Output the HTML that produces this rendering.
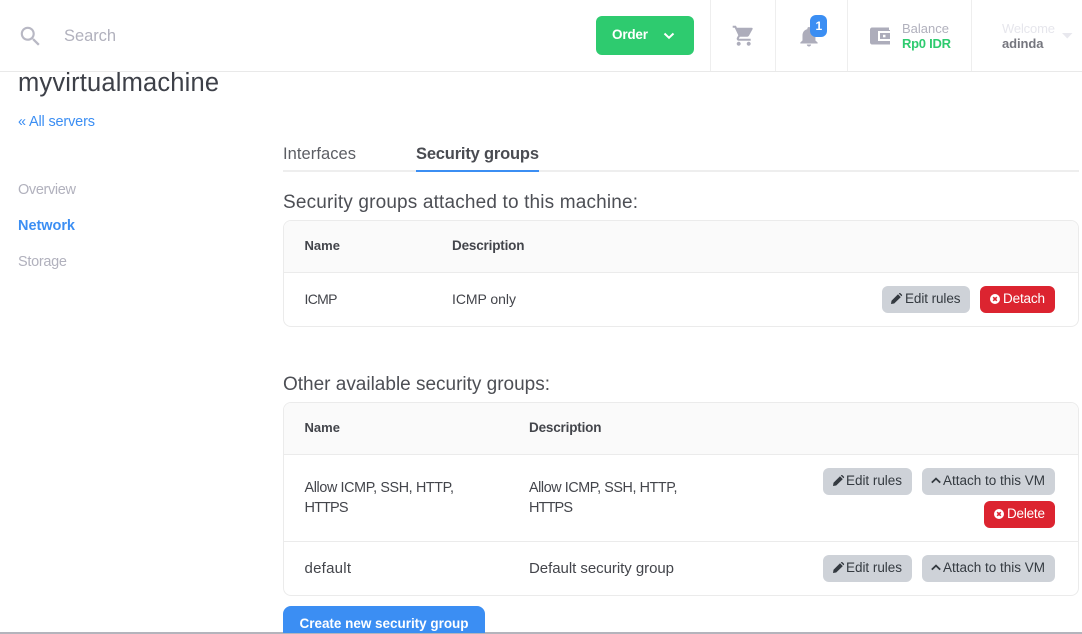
<!DOCTYPE html>
<html><head><meta charset="utf-8"><title>myvirtualmachine</title>
<style>
html,body{margin:0;padding:0;background:#fff;width:1082px;height:634px;overflow:hidden}
body{position:relative;font-family:"Liberation Sans",sans-serif}
.b{position:absolute;box-sizing:border-box}
.card{border:1px solid #ebebeb;border-radius:8px;background:#fff;overflow:hidden}
.btn{border-radius:6px}
.g{background:#ced2d8}.r{background:#dc2430}
svg{position:absolute;left:0;top:0}
text{font-family:"Liberation Sans",sans-serif}
.bt{font-weight:bold}
.dk{fill:#43454b}
.bk{fill:#343a40}
</style></head><body>
<div class="b" style="left:0;top:71px;width:1082px;height:1px;background:#e9e9e9"></div>
<div class="b" style="left:710px;top:0;width:1px;height:71px;background:#eee"></div>
<div class="b" style="left:775px;top:0;width:1px;height:71px;background:#eee"></div>
<div class="b" style="left:847px;top:0;width:1px;height:71px;background:#eee"></div>
<div class="b" style="left:971px;top:0;width:1px;height:71px;background:#eee"></div>
<div class="b btn" style="left:596px;top:16px;width:98px;height:39px;background:#2ecb6f"></div>

<div class="b" style="left:283px;top:170px;width:796px;height:2px;background:#eee"></div>
<div class="b" style="left:416px;top:170px;width:123px;height:2px;background:#3b8ef3"></div>

<div class="b card" style="left:283px;top:220px;width:796px;height:107px">
 <div style="height:51px;background:#fafafa;border-bottom:1px solid #ebebeb"></div>
</div>
<div class="b card" style="left:283px;top:402px;width:796px;height:194px">
 <div style="height:51px;background:#fafafa;border-bottom:1px solid #ebebeb"></div>
 <div style="position:absolute;left:0;right:0;top:138px;height:1px;background:#ebebeb"></div>
</div>

<div class="b btn g" style="left:882px;top:286px;width:88px;height:27px"></div>
<div class="b btn r" style="left:980px;top:286px;width:75px;height:27px"></div>
<div class="b btn g" style="left:823px;top:468px;width:89px;height:27px"></div>
<div class="b btn g" style="left:922px;top:468px;width:133px;height:27px"></div>
<div class="b btn r" style="left:984px;top:501px;width:71px;height:27px"></div>
<div class="b btn g" style="left:823px;top:555px;width:89px;height:27px"></div>
<div class="b btn g" style="left:922px;top:555px;width:133px;height:27px"></div>

<div class="b" style="left:0;top:632px;width:1082px;height:2px;background:#b4b4bc"></div>
<div class="b" style="left:283px;top:606px;width:202px;height:27px;background:#3b8ef3;border-radius:8px 8px 0 0"></div>

<svg width="1082" height="634" viewBox="0 0 1082 634" xmlns="http://www.w3.org/2000/svg">
 <defs>
  <path id="pen" d="M0 11l.5-3.200L7 1.300 9.800 4.100 3.200 10.500zM7.800.6l.5-.5c.3-.2.7-.2 1 0l1.700 1.700c.2.300.2.700 0 1l-.5.500z"/>
  <g id="x"><circle cx="5" cy="5" r="5" fill="#fff"/><path d="M3.200 3.200l3.600 3.600M6.800 3.200L3.200 6.800" stroke="#dc2430" stroke-width="1.600" fill="none"/></g>
  <path id="up" d="M.8 5.600L5 1.600l4.200 4" fill="none" stroke="#343a40" stroke-width="1.800"/>
 </defs>

 <!-- header icons -->
 <path transform="translate(17.500 23.500) scale(1.080)" fill="#b8b8c4" d="M15.500 14h-.79l-.28-.27C15.410 12.590 16 11.110 16 9.500 16 5.910 13.090 3 9.500 3S3 5.910 3 9.500 5.910 16 9.500 16c1.610 0 3.090-.59 4.230-1.570l.27.28v.79l5 4.990L20.490 19l-4.990-5zm-6 0C7.010 14 5 11.990 5 9.500S7.010 5 9.500 5 14 7.010 14 9.500 11.990 14 9.500 14z"/>
 <path d="M664.500 33.500l4.500 4.300 4.500-4.300" fill="none" stroke="#fff" stroke-width="2"/>
 <path transform="translate(731.700 23.700)" fill="#adadbb" d="M7 18c-1.100 0-1.990.9-1.990 2S5.900 22 7 22s2-.9 2-2-.9-2-2-2zM1 2v2h2l3.600 7.590-1.350 2.450c-.16.28-.25.61-.25.96 0 1.100.9 2 2 2h12v-2H7.420c-.14 0-.25-.11-.25-.25l.03-.12.9-1.630h7.450c.75 0 1.410-.41 1.750-1.030l3.580-6.490c.08-.14.12-.31.12-.48 0-.55-.45-1-1-1H5.210l-.94-2H1zm16 16c-1.100 0-1.990.9-1.990 2s.89 2 1.990 2 2-.9 2-2-.9-2-2-2z"/>
 <path transform="translate(796 24.500) scale(1.080 1)" fill="#adadbb" d="M12 22c1.100 0 2-.9 2-2h-4c0 1.100.89 2 2 2zm6-6v-5c0-3.070-1.640-5.640-4.500-6.320V4c0-.83-.67-1.500-1.500-1.500s-1.500.67-1.500 1.500v.68C7.630 5.360 6 7.920 6 11v5l-2 2v1h16v-1l-2-2z"/>
 <rect x="810" y="15" width="17" height="22" rx="6" fill="#3b8ef3"/>
 <text x="815.500" y="30" font-size="12" fill="#fff" font-weight="bold">1</text>
 <path fill="#adadbb" d="M872 27.500h17v2.500h1v14.500h-18c-1 0-2-1-2-2v-13c0-1 1-2 2-2z"/>
 <rect x="878" y="31" width="12" height="10" fill="#fff"/>
 <rect x="880" y="33" width="10" height="6" fill="#adadbb"/>
 <rect x="883" y="34.800" width="2.500" height="2.500" fill="#fff"/>
 <path d="M1062 33h10.500l-5.250 5.500z" fill="#e8e8ee"/>

 <!-- header text -->
 <text x="64" y="41" font-size="16.500" fill="#b1b1bd" textLength="52" lengthAdjust="spacing">Search</text>
 <text x="612" y="39" font-size="13.500" font-weight="bold" fill="#fff" textLength="36" lengthAdjust="spacing">Order</text>
 <text x="902" y="33" font-size="13" fill="#b1b1bd" textLength="47" lengthAdjust="spacing">Balance</text>
 <text x="902" y="48" font-size="13" font-weight="bold" fill="#2ecb6f" textLength="49" lengthAdjust="spacing">Rp0 IDR</text>
 <text x="1002" y="33" font-size="13" fill="#e6e6ec" textLength="53" lengthAdjust="spacing">Welcome</text>
 <text x="1002" y="48" font-size="13" font-weight="bold" fill="#75767e" textLength="41.500" lengthAdjust="spacing">adinda</text>

 <!-- left column -->
 <text x="18" y="91" font-size="25.500" fill="#3d4048" textLength="201" lengthAdjust="spacing">myvirtualmachine</text>
 <text x="18" y="126" font-size="14.500" fill="#3b8ef3" textLength="77" lengthAdjust="spacing">« All servers</text>
 <text x="18" y="194" font-size="14.500" fill="#b1b1bd" textLength="58" lengthAdjust="spacing">Overview</text>
 <text x="18" y="230" font-size="14.500" font-weight="bold" fill="#3b8ef3" textLength="57" lengthAdjust="spacing">Network</text>
 <text x="18" y="266" font-size="14.500" fill="#b1b1bd" textLength="49" lengthAdjust="spacing">Storage</text>

 <!-- tabs + headings -->
 <text x="283" y="159" font-size="16.500" fill="#5c5e64" textLength="73" lengthAdjust="spacing">Interfaces</text>
 <text x="416" y="159" font-size="16.500" font-weight="bold" fill="#4a4c52" textLength="123" lengthAdjust="spacing">Security groups</text>
 <text x="283" y="208" font-size="19" fill="#4d4f55" textLength="355" lengthAdjust="spacing">Security groups attached to this machine:</text>
 <text x="283" y="390" font-size="19" fill="#4d4f55" textLength="267" lengthAdjust="spacing">Other available security groups:</text>

 <!-- table 1 -->
 <text class="bt dk" x="304.500" y="250" font-size="13" textLength="35.500" lengthAdjust="spacing">Name</text>
 <text class="bt dk" x="452" y="250" font-size="13.500" textLength="72.500" lengthAdjust="spacing">Description</text>
 <text class="dk" x="304.500" y="304" font-size="14" textLength="33" lengthAdjust="spacing">ICMP</text>
 <text class="dk" x="452" y="304" font-size="14" textLength="64" lengthAdjust="spacing">ICMP only</text>
 <use href="#pen" x="891" y="293" fill="#343a40"/>
 <text class="bk" x="905" y="303" font-size="13.500" textLength="55.500" lengthAdjust="spacing">Edit rules</text>
 <use href="#x" x="990" y="294"/>
 <text x="1003" y="303" font-size="13.500" fill="#fff" textLength="42" lengthAdjust="spacing">Detach</text>

 <!-- table 2 -->
 <text class="bt dk" x="304.500" y="432" font-size="13" textLength="35.500" lengthAdjust="spacing">Name</text>
 <text class="bt dk" x="529" y="432" font-size="13.500" textLength="72.500" lengthAdjust="spacing">Description</text>
 <text class="dk" x="304.500" y="492" font-size="14.300" textLength="149.500" lengthAdjust="spacing">Allow ICMP, SSH, HTTP,</text>
 <text class="dk" x="304.500" y="512" font-size="14.500" textLength="44" lengthAdjust="spacing">HTTPS</text>
 <text class="dk" x="529" y="492" font-size="14.300" textLength="148.500" lengthAdjust="spacing">Allow ICMP, SSH, HTTP,</text>
 <text class="dk" x="529" y="512" font-size="14.500" textLength="44" lengthAdjust="spacing">HTTPS</text>
 <text class="dk" x="304.500" y="573" font-size="15" textLength="46.500" lengthAdjust="spacing">default</text>
 <text class="dk" x="529" y="573" font-size="15" textLength="145" lengthAdjust="spacing">Default security group</text>

 <use href="#pen" x="833" y="475" fill="#343a40"/>
 <text class="bk" x="846" y="485" font-size="13.500" textLength="56" lengthAdjust="spacing">Edit rules</text>
 <use href="#up" x="931" y="477"/>
 <text class="bk" x="943" y="485" font-size="13.500" textLength="102" lengthAdjust="spacing">Attach to this VM</text>
 <use href="#x" x="994" y="509"/>
 <text x="1007" y="518" font-size="13.500" fill="#fff" textLength="38" lengthAdjust="spacing">Delete</text>
 <use href="#pen" x="833" y="562" fill="#343a40"/>
 <text class="bk" x="846" y="572" font-size="13.500" textLength="56" lengthAdjust="spacing">Edit rules</text>
 <use href="#up" x="931" y="564"/>
 <text class="bk" x="943" y="572" font-size="13.500" textLength="102" lengthAdjust="spacing">Attach to this VM</text>

 <text x="299.500" y="628" font-size="13.500" font-weight="bold" fill="#fff" textLength="169" lengthAdjust="spacing">Create new security group</text>
</svg>
</body></html>
